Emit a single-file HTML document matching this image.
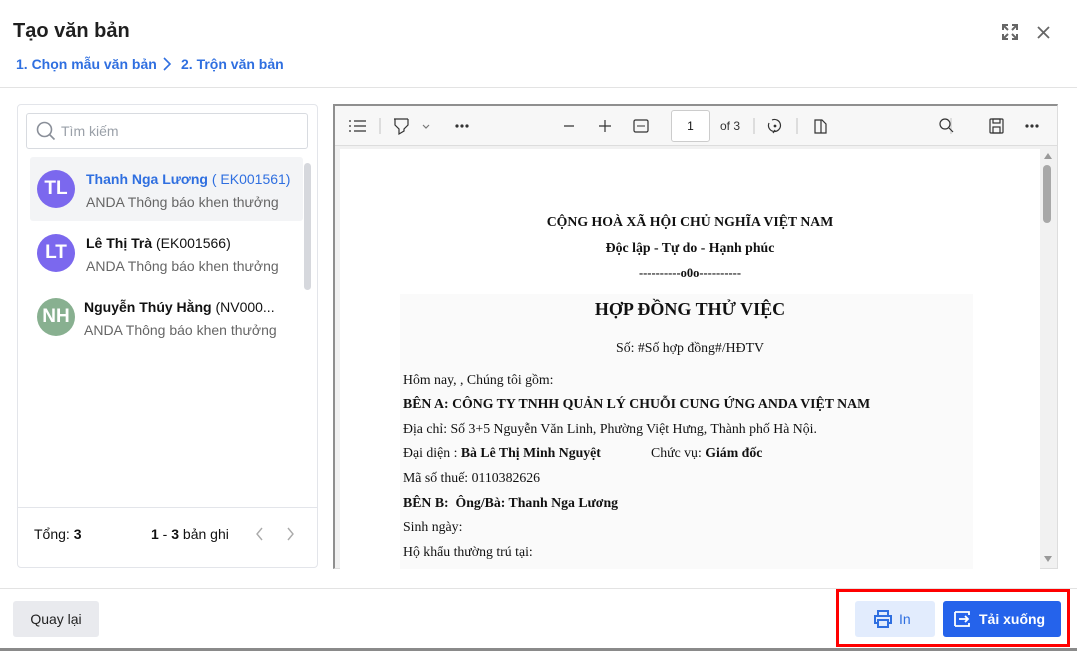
<!DOCTYPE html>
<html><head><meta charset="utf-8"><style>
*{box-sizing:border-box;margin:0;padding:0}
body{width:1077px;height:651px;overflow:hidden;background:#fff;font-family:"Liberation Sans",sans-serif;position:relative;color:#111}
.a{position:absolute}
.t{font-family:"Liberation Serif",serif;font-size:13.8px;color:#111;white-space:nowrap}
.c{left:340px;width:700px;text-align:center}
.l{left:403px}
b{font-weight:700}
.av{position:absolute;width:38px;height:38px;border-radius:50%;color:#fff;font-weight:700;font-size:19px;display:flex;align-items:center;justify-content:center}
.nm{position:absolute;font-size:14px;font-weight:700;white-space:nowrap}
.sb{position:absolute;font-size:14px;color:#666;white-space:nowrap}
</style></head><body>
<div class="a" style="left:13px;top:20px;font-size:20px;font-weight:600;color:#1f1f1f">Tạo văn bản</div>
<div class="a" style="left:16px;top:56px;font-size:14px;font-weight:700;color:#2f6fe0">1. Chọn mẫu văn bản</div>
<svg class="a" style="left:161px;top:57px" width="12" height="14" viewBox="0 0 12 14"><path d="M3 1l6 6-6 6" fill="none" stroke="#2f6fe0" stroke-width="1.6"/></svg>
<div class="a" style="left:181px;top:56px;font-size:14px;font-weight:700;color:#2f6fe0">2. Trộn văn bản</div>
<svg class="a" style="left:1000px;top:22px" width="20" height="20" viewBox="0 0 20 20" fill="none" stroke="#666" stroke-width="2"><path d="M3 8V3h5M3 3l5 5M17 8V3h-5M17 3l-5 5M3 12v5h5M3 17l5-5M17 12v5h-5M17 17l-5-5"/></svg>
<svg class="a" style="left:1036px;top:25px" width="15" height="15" viewBox="0 0 15 15"><path d="M2 2l11 11M13 2L2 13" stroke="#666" stroke-width="1.8"/></svg>
<div class="a" style="left:0;top:87px;width:1077px;height:1px;background:#e3e3e3"></div>

<div class="a" style="left:17px;top:104px;width:301px;height:464px;border:1px solid #e3e5ea;border-radius:4px"></div>
<div class="a" style="left:26px;top:113px;width:282px;height:36px;border:1px solid #d8dbe0;border-radius:3px"></div>
<svg class="a" style="left:35px;top:120px" width="22" height="22" viewBox="0 0 22 22"><circle cx="9.5" cy="9.5" r="7" fill="none" stroke="#8a8f99" stroke-width="1.6"/><path d="M14.5 14.5l5 5" stroke="#8a8f99" stroke-width="1.6"/></svg>
<div class="a" style="left:61px;top:123px;font-size:14px;color:#9aa0a8">Tìm kiếm</div>
<div class="a" style="left:30px;top:157px;width:273px;height:64px;background:#f3f4f6;border-radius:3px"></div>
<div class="a" style="left:304px;top:163px;width:7px;height:127px;background:#d6d8dd;border-radius:4px"></div>
<div class="av" style="left:37px;top:170px;background:#7b68ee">TL</div>
<div class="nm" style="left:86px;top:171px;color:#2f6fe0">Thanh Nga Lương <span style="font-weight:400">( EK001561)</span></div>
<div class="sb" style="left:86px;top:194px">ANDA Thông báo khen thưởng</div>
<div class="av" style="left:37px;top:234px;background:#7b68ee">LT</div>
<div class="nm" style="left:86px;top:235px">Lê Thị Trà <span style="font-weight:400">(EK001566)</span></div>
<div class="sb" style="left:86px;top:258px">ANDA Thông báo khen thưởng</div>
<div class="av" style="left:37px;top:298px;background:#88b090">NH</div>
<div class="nm" style="left:84px;top:299px">Nguyễn Thúy Hằng <span style="font-weight:400">(NV000...</span></div>
<div class="sb" style="left:84px;top:322px">ANDA Thông báo khen thưởng</div>
<div class="a" style="left:18px;top:507px;width:299px;height:1px;background:#e3e5ea"></div>
<div class="a" style="left:34px;top:526px;font-size:14px">Tổng: <b>3</b></div>
<div class="a" style="left:151px;top:526px;font-size:14px"><b>1</b> - <b>3</b> bản ghi</div>
<svg class="a" style="left:253px;top:526px" width="44" height="16" viewBox="0 0 44 16"><path d="M9 2L4 8l5 6M35 2l5 6-5 6" fill="none" stroke="#aaa" stroke-width="1.4"/></svg>

<div class="a" style="left:333px;top:104px;width:725px;height:465px;border-top:2px solid #8f8f8f;border-left:2px solid #8f8f8f;border-right:1px solid #ddd;border-bottom:1px solid #ddd;background:#f1f1f1"></div>
<div class="a" style="left:335px;top:106px;width:722px;height:40px;background:#f7f7f7;border-bottom:1px solid #ddd"></div>
<svg class="a" style="left:335px;top:106px" width="722" height="40" viewBox="0 0 722 40" fill="none" stroke="#333" stroke-width="1.2">
<path d="M14 15h2M14 20h2M14 25h2M19 15h12M19 20h12M19 25h12"/>
<path d="M45 12v16" stroke="#ccc"/>
<path d="M59 13h14M60 13v6l4 4v5l5-3v-2l4-4v-6"/>
<path d="M88 19l3 3 3-3" stroke="#777"/>
<circle cx="122" cy="20" r="1" fill="#333"/><circle cx="127" cy="20" r="1" fill="#333"/><circle cx="132" cy="20" r="1" fill="#333"/>
<path d="M229 20h10M264 20h12M270 14v12"/>
<rect x="299" y="14" width="14" height="12" rx="1.5"/><path d="M302 20h8" stroke-width="1"/>
<path d="M361 12v16M419 12v16M462 12v16M616 12v16" stroke="#ccc"/>
<path d="M437 14a6 6 0 1 1-3 3M440 24l-2 3"/><circle cx="440" cy="20" r="0.8" fill="#333"/>
<path d="M480 14h7l4 4v9h-11zM486 14v13"/>
<circle cx="610" cy="18" r="5"/><path d="M614 22l4 4"/>
<rect x="655" y="13" width="13" height="14" rx="1"/><rect x="658" y="13" width="7" height="4"/><rect x="658" y="21" width="7" height="6"/>
<circle cx="692" cy="20" r="1" fill="#333"/><circle cx="697" cy="20" r="1" fill="#333"/><circle cx="702" cy="20" r="1" fill="#333"/>
</svg>
<div class="a" style="left:671px;top:110px;width:39px;height:32px;background:#fff;border:1px solid #ccc;border-radius:3px;font-size:12px;text-align:center;line-height:30px">1</div>
<div class="a" style="left:720px;top:119px;font-size:12px;color:#333">of 3</div>
<div class="a" style="left:340px;top:149px;width:700px;height:420px;background:#fff"></div>
<div class="a" style="left:400px;top:294px;width:573px;height:275px;background:#fafafa"></div>
<div class="a" style="left:1040px;top:147px;width:17px;height:421px;background:#f1f1f1"></div>
<div class="a" style="left:1043px;top:165px;width:8px;height:58px;background:#a8a8a8;border-radius:4px"></div>
<svg class="a" style="left:1042px;top:150px" width="12" height="416"><path d="M2 9l4-6 4 6z" fill="#999"/><path d="M2 406l4 6 4-6z" fill="#999"/></svg>

<div class="a t c" style="top:214px"><b>CỘNG HOÀ XÃ HỘI CHỦ NGHĨA VIỆT NAM</b></div>
<div class="a t c" style="top:240px"><b>Độc lập - Tự do - Hạnh phúc</b></div>
<div class="a t c" style="top:266px;font-size:12.5px"><b>----------o0o----------</b></div>
<div class="a t c" style="top:299px;font-size:18px"><b>HỢP ĐỒNG THỬ VIỆC</b></div>
<div class="a t c" style="top:340px">Số: #Số hợp đồng#/HĐTV</div>
<div class="a t l" style="top:372px">Hôm nay, , Chúng tôi gồm:</div>
<div class="a t l" style="top:396px"><b>BÊN A: CÔNG TY TNHH QUẢN LÝ CHUỖI CUNG ỨNG ANDA VIỆT NAM</b></div>
<div class="a t l" style="top:421px">Địa chỉ: Số 3+5 Nguyễn Văn Linh, Phường Việt Hưng, Thành phố Hà Nội.</div>
<div class="a t l" style="top:445px">Đại diện : <b>Bà Lê Thị Minh Nguyệt</b></div>
<div class="a t" style="left:651px;top:445px">Chức vụ: <b>Giám đốc</b></div>
<div class="a t l" style="top:470px">Mã số thuế: 0110382626</div>
<div class="a t l" style="top:495px"><b>BÊN B:&nbsp; Ông/Bà: Thanh Nga Lương</b></div>
<div class="a t l" style="top:519px">Sinh ngày:</div>
<div class="a t l" style="top:544px">Hộ khẩu thường trú tại:</div>

<div class="a" style="left:0;top:588px;width:1077px;height:1px;background:#e3e3e3"></div>
<div class="a" style="left:13px;top:601px;width:86px;height:36px;background:#e9eaee;border-radius:3px;font-size:14px;text-align:center;line-height:36px;color:#222">Quay lại</div>
<div class="a" style="left:836px;top:589px;width:234px;height:58px;border:3px solid #f00"></div>
<div class="a" style="left:855px;top:601px;width:80px;height:36px;background:#e2ecfd;border-radius:3px"></div>
<svg class="a" style="left:872px;top:609px" width="22" height="20" viewBox="0 0 22 20" fill="none" stroke="#2f6fe0" stroke-width="2"><path d="M6 6V2h10v4M6 14H3V7h16v7h-3"/><rect x="6" y="11" width="10" height="7"/></svg>
<div class="a" style="left:899px;top:611px;font-size:14px;color:#2f6fe0">In</div>
<div class="a" style="left:943px;top:601px;width:118px;height:36px;background:#2563eb;border-radius:3px"></div>
<svg class="a" style="left:953px;top:610px" width="18" height="18" viewBox="0 0 18 18" fill="none" stroke="#fff" stroke-width="1.8"><path d="M2 2h14v3M2 16h14v-3M2 2v14"/><path d="M6 9h9M12 6l3 3-3 3"/></svg>
<div class="a" style="left:979px;top:611px;font-size:14px;font-weight:700;color:#fff">Tải xuống</div>
<div class="a" style="left:0;top:648px;width:1077px;height:3px;background:#8a8a8a"></div>
</body></html>
